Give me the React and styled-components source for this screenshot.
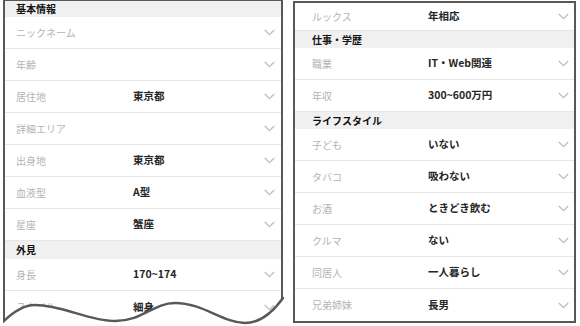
import React from 'react';
import styled, { createGlobalStyle } from 'styled-components';

const GlobalStyle = createGlobalStyle`
  html, body {
    margin: 0;
    padding: 0;
    background: #fff;
  }
  body {
    font-family: "Noto Sans CJK JP", "Noto Sans", sans-serif;
  }
`;

const WAVE = 'M0 322 C 10 312, 20 305, 32 305 C 60 305, 85 321, 112 321 C 140 321, 150 303, 172 303 C 200 303, 220 323, 242 323 C 258 323, 270 312, 280 298';

const Page = styled.div`
  width: 580px;
  height: 326px;
  display: flex;
  align-items: flex-start;
  overflow: hidden;
`;

const LeftWrap = styled.div`
  position: relative;
  width: 280px;
  height: 326px;
  margin-left: 3px;
`;

const Panel = styled.div`
  box-sizing: border-box;
  background: #fff;
  border: 2px solid #585858;
  border-top-width: ${p => p.$top}px;
  border-bottom-width: ${p => p.$bottom}px;
  display: flex;
  flex-direction: column;
`;

const LeftPanel = styled(Panel)`
  height: 326px;
  overflow: hidden;
  clip-path: path('${WAVE} L 280 0 L 0 0 Z');
`;

const RightPanel = styled(Panel)`
  width: 283px;
  margin-left: 10px;
  margin-top: 1px;
`;

const WaveLine = styled.svg`
  position: absolute;
  left: 0;
  top: 0;
  pointer-events: none;
`;

const SectionHead = styled.div`
  height: ${p => p.$h}px;
  flex: none;
  background: #f0f0f0;
  display: flex;
  align-items: center;
  padding-left: ${p => p.$pad}px;
  font-size: 10px;
  font-weight: 700;
  color: #111;
  line-height: 1;
`;

const Row = styled.div`
  box-sizing: border-box;
  flex: none;
  height: ${p => p.$h}px;
  display: grid;
  grid-template-columns: ${p => p.$col}px 1fr auto;
  align-items: center;
  padding: 0 ${p => p.$right}px 0 ${p => p.$pad}px;
  border-bottom: 1px solid #e6e6e6;
  &:last-child {
    border-bottom: none;
  }
`;

const Label = styled.span`
  font-size: 10px;
  color: #b4b4b4;
  line-height: 1;
`;

const Value = styled.span`
  font-size: 10.5px;
  font-weight: 700;
  color: #262626;
  line-height: 1;
`;

const Chevron = () => (
  <svg width="11" height="7" viewBox="0 0 11 7">
    <polyline points="0.8,1 5.5,5.6 10.2,1" fill="none" stroke="#bdbdbd" strokeWidth="1.3" />
  </svg>
);

const leftData = [
  { head: '基本情報', h: 16 },
  { label: 'ニックネーム' },
  { label: '年齢' },
  { label: '居住地', value: '東京都' },
  { label: '詳細エリア' },
  { label: '出身地', value: '東京都' },
  { label: '血液型', value: 'A型' },
  { label: '星座', value: '蟹座' },
  { head: '外見', h: 18 },
  { label: '身長', value: '170~174' },
  { label: 'スタイル', value: '細身' },
];

const rightData = [
  { label: 'ルックス', value: '年相応', h: 28 },
  { head: '仕事・学歴', h: 17 },
  { label: '職業', value: 'IT・Web関連' },
  { label: '年収', value: '300~600万円' },
  { head: 'ライフスタイル', h: 17 },
  { label: '子ども', value: 'いない' },
  { label: 'タバコ', value: '吸わない' },
  { label: 'お酒', value: 'ときどき飲む' },
  { label: 'クルマ', value: 'ない' },
  { label: '同居人', value: '一人暮らし' },
  { label: '兄弟姉妹', value: '長男' },
];

const Items = ({ data, pad, col, right }) =>
  data.map((d, i) =>
    d.head ? (
      <SectionHead key={i} $h={d.h} $pad={pad}>{d.head}</SectionHead>
    ) : (
      <Row key={i} $h={d.h || 32} $pad={pad} $col={col} $right={right}>
        <Label>{d.label}</Label>
        <Value>{d.value}</Value>
        <Chevron />
      </Row>
    )
  );

export default function App() {
  return (
    <>
      <GlobalStyle />
      <Page>
        <LeftWrap>
          <LeftPanel $top={1} $bottom={0}>
            <Items data={leftData} pad={11} col={117} right={6} />
          </LeftPanel>
          <WaveLine width="282" height="326" viewBox="0 0 282 326">
            <path d={WAVE} fill="none" stroke="#585858" strokeWidth="2.4" strokeLinecap="round" />
          </WaveLine>
        </LeftWrap>
        <RightPanel $top={2} $bottom={2}>
          <Items data={rightData} pad={17} col={116} right={5} />
        </RightPanel>
      </Page>
    </>
  );
}
